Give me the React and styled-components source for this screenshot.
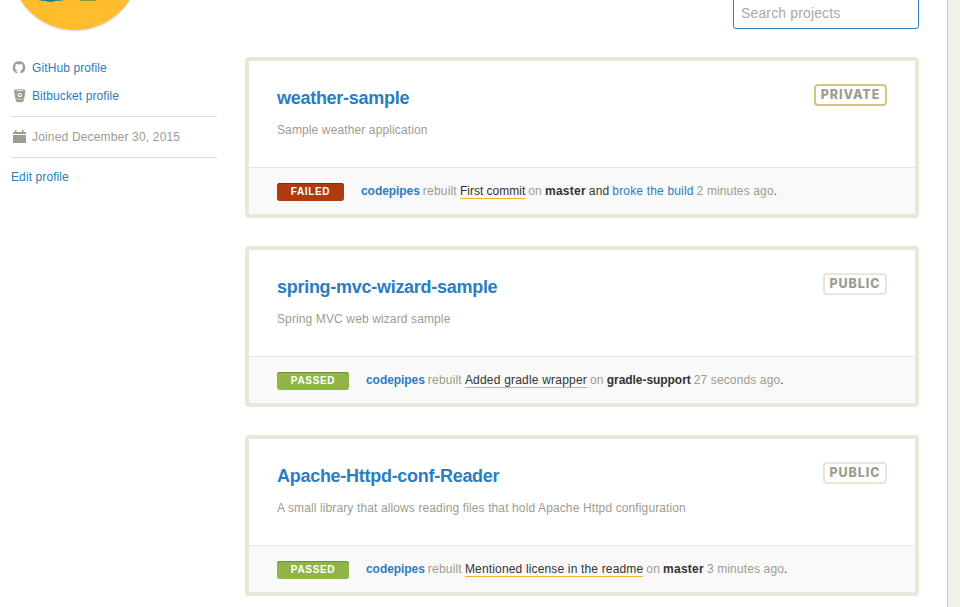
import React from "react";
import styled, { createGlobalStyle } from "styled-components";

const GlobalStyle = createGlobalStyle`
  * { box-sizing: border-box; }
  html, body { margin: 0; height: 100%; overflow: hidden; }
  body { background: #f1f1ea; font-family: "Liberation Sans", Arial, sans-serif; font-size: 12px; color: #333; }
  a { color: #2a7dc1; text-decoration: none; }
`;

const Page = styled.div`
  display: flex;
  width: 948px;
  height: 607px;
  overflow: hidden;
  background: #fff;
  border-right: 1px solid #c9ccb8;
`;

const Sidebar = styled.aside`
  width: 206px;
  margin-left: 11px;
  flex: none;
`;

const Avatar = styled.svg`
  display: block;
  height: 36px;
  width: 140px;
  margin-left: -6px;
`;

const ProfileLinks = styled.ul`
  list-style: none;
  margin: 18px 0 0;
  padding: 0 0 6px;
`;

const InfoRow = styled.li`
  display: flex;
  align-items: center;
  height: 28px;
  gap: 5px;
  letter-spacing: 0.1px;
  svg { flex: none; fill: #9d9c90; }
`;

const Joined = styled.div`
  display: flex;
  align-items: center;
  gap: 5px;
  height: 42px;
  border-top: 1px solid #ddd;
  border-bottom: 1px solid #ddd;
  color: #9d9c90;
  letter-spacing: 0.17px;
  svg { flex: none; fill: #9d9c90; }
`;

const EditLink = styled.a`
  display: block;
  margin-top: 12px;
  line-height: 14px;
  letter-spacing: 0.1px;
`;

const Main = styled.main`
  width: 674px;
  margin-left: 28px;
  flex: none;
`;

const SearchInput = styled.input`
  display: block;
  width: 186px;
  height: 33px;
  margin: -4px 0 28px auto;
  padding: 0 7px;
  border: 1px solid #2a7dc1;
  border-radius: 3px;
  outline: none;
  background: #fff;
  font: 14px "Liberation Sans", Arial, sans-serif;
  letter-spacing: 0.14px;
  &::placeholder { color: #a9a9a9; opacity: 1; }
`;

const Card = styled.article`
  height: 161px;
  margin-bottom: 28px;
  border: 4px solid #e6e8da;
  border-radius: 4px;
  background: #fff;
`;

const CardBody = styled.div`
  display: flex;
  justify-content: space-between;
  align-items: flex-start;
  height: 106px;
  padding: 23px 28px 0;
`;

const Title = styled.h2`
  margin: 3px 0 0;
  font-size: 18px;
  line-height: 22px;
  letter-spacing: -0.28px;
`;

const Description = styled.p`
  margin: 14px 0 0;
  line-height: 14px;
  color: #9d9c90;
  letter-spacing: 0.12px;
`;

const Visibility = styled.span`
  height: 22px;
  width: ${(p) => (p.$private ? 73 : 64)}px;
  border: 2px solid ${(p) => (p.$private ? "#d9c47c" : "#e6e8da")};
  border-radius: 4px;
  color: #9d9c90;
  font: 800 12.5px/18px Inter, "Liberation Sans", sans-serif;
  letter-spacing: 0.9px;
  text-align: center;
  white-space: nowrap;
`;

const BuildBar = styled.footer`
  display: flex;
  align-items: center;
  height: 47px;
  padding: 0 28px;
  border-top: 1px solid #e6e8da;
  background: #f9f9f9;
`;

const Status = styled.span`
  width: ${(p) => (p.$failed ? 67 : 72)}px;
  height: 18px;
  margin: 2px 17px 0 0;
  border-radius: 3px;
  background: ${(p) => (p.$failed ? "#ae3a0d" : "#90b447")};
  box-shadow: inset 0 1px 0 ${(p) => (p.$failed ? "#842a08" : "#6f8f33")};
  color: #fff;
  font: bold 10px/18px "Liberation Sans", Arial, sans-serif;
  letter-spacing: 0.65px;
  text-align: center;
`;

const Summary = styled.p`
  display: flex;
  gap: 3px;
  margin: 1px 0 0;
  line-height: 15px;
  color: #9d9c90;
  white-space: nowrap;
`;

const Piece = styled.span`
  letter-spacing: ${(p) => p.$track || 0}px;
`;

const Strong = styled(Piece)`
  font-weight: bold;
  color: #333;
`;

const Plain = styled(Piece)`
  color: #333;
`;

const Commit = styled(Piece)`
  height: 15px;
  color: #333;
  border-bottom: 1px solid #f0b429;
`;

const GithubIcon = () => (
  <svg width="16" height="16" viewBox="0 0 16 16">
    <path
      fillRule="evenodd"
      d="M8 1.300A6.200 6.200 0 0 0 5.800 13.300Q6.300 13.400 6.300 12.900V11.900C4.700 12.200 4.300 11.300 4 10.700C5 11.200 5.300 11.500 6.400 11.100Q6.400 10.700 6.800 10.400C4.900 10.100 4.100 9 4.100 7.400Q4.100 6.300 4.800 5.500Q4.500 4.700 4.800 3.800Q5.600 3.900 6.600 4.500Q8 4.200 9.400 4.500Q10.400 3.900 11.200 3.800Q11.500 4.700 11.200 5.500Q11.900 6.300 11.900 7.400C11.900 9 11.100 10.100 9.200 10.400Q9.700 10.900 9.700 12V12.900Q9.700 13.400 10.200 13.300A6.200 6.200 0 0 0 8 1.300Z"
    />
  </svg>
);

const BitbucketIcon = () => (
  <svg width="16" height="16" viewBox="0 0 16 16">
    <path
      fillRule="evenodd"
      d="M3 2.700C3 .8 14.500 .8 14.500 2.700L13.300 10C11.500 11.300 6 11.300 4.200 10ZM4.800 2.600C6 3.300 11.500 3.300 12.700 2.600C11.500 2.100 6 2.100 4.800 2.600ZM8.700 4.900A2.200 2.200 0 1 0 8.700 9.300A2.200 2.200 0 1 0 8.700 4.900Z"
    />
    <circle cx="8.700" cy="7.100" r="1.100" />
    <path d="M4.400 10.600C6 11.900 11.500 11.900 13.100 10.600L12.600 13.200C11 14.600 6.500 14.600 4.900 13.200Z" />
  </svg>
);

const CalendarIcon = () => (
  <svg width="16" height="16" viewBox="0 0 16 16">
    <path d="M2 3H4V1H5.500V3H11V1H12.500V3H15V5H2ZM2 6H15V13.500Q15 14 14.500 14H2.500Q2 14 2 13.500Z" />
  </svg>
);

const PROJECTS = [
  {
    name: "weather-sample", description: "Sample weather application", isPrivate: true, failed: true,
    commit: "First commit", commitTrack: 0, branch: "master", branchTrack: 0.25, when: "2 minutes ago",
  },
  {
    name: "spring-mvc-wizard-sample", description: "Spring MVC web wizard sample",
    commit: "Added gradle wrapper", commitTrack: 0.2, branch: "gradle-support", branchTrack: -0.05, when: "27 seconds ago",
  },
  {
    name: "Apache-Httpd-conf-Reader",
    description: "A small library that allows reading files that hold Apache Httpd configuration",
    commit: "Mentioned license in the readme", commitTrack: 0.16, branch: "master", branchTrack: 0.25, when: "3 minutes ago",
  },
];

const Project = ({ project: p }) => (
  <Card>
    <CardBody>
      <div>
        <Title><a href="#">{p.name}</a></Title>
        <Description>{p.description}</Description>
      </div>
      <Visibility $private={p.isPrivate}>{p.isPrivate ? "PRIVATE" : "PUBLIC"}</Visibility>
    </CardBody>
    <BuildBar>
      <Status $failed={p.failed}>{p.failed ? "FAILED" : "PASSED"}</Status>
      <Summary>
        <Strong $track={-0.06}><a href="#">codepipes</a></Strong>
        <Piece $track={0.2}>rebuilt</Piece>
        <Commit $track={p.commitTrack}>{p.commit}</Commit>
        <Piece $track={0.2}>on</Piece>
        <Strong $track={p.branchTrack}>{p.branch}</Strong>
        {p.failed && <Plain $track={0.15}>and</Plain>}
        {p.failed && <Piece $track={0.17}><a href="#">broke the build</a></Piece>}
        <Piece $track={0.13}>{p.when}<Plain>.</Plain></Piece>
      </Summary>
    </BuildBar>
  </Card>
);

export default function App() {
  return (
    <>
      <GlobalStyle />
      <Page>
        <Sidebar>
          <Avatar viewBox="5 0 140 36">
            <circle cx="75" cy="-33" r="64.500" fill="#ccc" opacity="0.6" />
            <circle cx="75" cy="-34.500" r="64.500" fill="#ffbd2e" />
            <path d="M38 0H63V.6Q59 1 54 1V1.700H47V1Q41 1 38 0Z" fill="#0d7f94" />
            <path d="M79 0H97L95 1H81Z" fill="#8b9a3c" />
          </Avatar>
          <ProfileLinks>
            <InfoRow><GithubIcon /><a href="#">GitHub profile</a></InfoRow>
            <InfoRow><BitbucketIcon /><a href="#">Bitbucket profile</a></InfoRow>
          </ProfileLinks>
          <Joined><CalendarIcon />Joined December 30, 2015</Joined>
          <EditLink href="#">Edit profile</EditLink>
        </Sidebar>
        <Main>
          <SearchInput placeholder="Search projects" />
          {PROJECTS.map((p) => <Project key={p.name} project={p} />)}
        </Main>
      </Page>
    </>
  );
}
